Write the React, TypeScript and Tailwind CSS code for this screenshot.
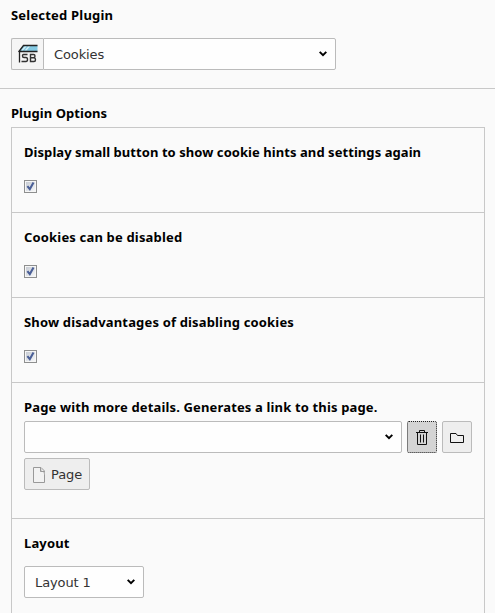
import type { ReactNode } from 'react';

const bold = 'font-["Noto_Sans",sans-serif] font-bold text-[13px] leading-4 whitespace-nowrap text-black';
const regular = 'pt-px font-["DejaVu_Sans",Verdana,sans-serif] text-[13px] leading-4 tracking-[-0.1px] text-[#333] whitespace-nowrap';

function Title({ children, spacing = 'tracking-[0.15px]' }: { children: ReactNode; spacing?: string }) {
  return <h2 className={`${bold} ${spacing}`}>{children}</h2>;
}

function Chevron() {
  return (
    <svg width="8" height="6" viewBox="0 0 8 6" className="shrink-0" fill="none" stroke="#000" strokeWidth="2">
      <path d="M.7.9 4 4.1 7.3.9" />
    </svg>
  );
}

function Select({ value, className }: { value: string; className: string }) {
  return (
    <div className={`flex h-8 items-center justify-between border border-[#bbb] bg-[#fefefe] pr-2 pl-2.5 ${className}`}>
      <span className={regular}>{value}</span>
      <Chevron />
    </div>
  );
}

function Checkbox() {
  return (
    <svg width="13" height="13" viewBox="0 0 13 13" className="block">
      <defs>
        <linearGradient id="box" x1="0" y1="0" x2="1" y2="1">
          <stop offset="0" stopColor="#c6cbd3" />
          <stop offset="1" stopColor="#f6f7f8" />
        </linearGradient>
      </defs>
      <rect x=".5" y=".5" width="12" height="12" fill="#f6f6f6" stroke="#8e8f8f" />
      <rect x="2" y="2" width="9" height="9" fill="url(#box)" />
      <path d="M3.4 6.2 5.8 9.2 9.5 2.4" fill="none" stroke="#4a5f97" strokeWidth="2.1" />
    </svg>
  );
}

function CheckRow({ label, spacing }: { label: string; spacing: string }) {
  return (
    <section className="h-[85px] border-b border-[#c8c8c8] px-3 pt-4">
      <Title spacing={spacing}>{label}</Title>
      <div className="mt-5">
        <Checkbox />
      </div>
    </section>
  );
}

function PluginIcon() {
  return (
    <svg width="20" height="20" viewBox="0 0 20 20">
      <path d="M5 1.5H19.5V7.5H1.5Z" fill="#84c9e2" />
      <path d="M8 2 4 6.5M11.5 2 7.5 6.5" stroke="#d3eff8" strokeWidth="1.3" />
      <path d="M.5 8 5.5 1.5H19.5M.5 7.5H19.5M1.5 7V18.5" fill="none" stroke="#222" strokeWidth="1.3" />
      <path
        d="M9.500 10.500H5.500Q4.500 10.500 4.500 12T6 13.500H8Q9.500 13.500 9.500 15.500T8 17.500H3.500M12.500 10.500V17.500H16Q17.500 17.500 17.500 15.700T16 13.800H12.500H15.500Q17 13.500 17 12T15.500 10.500Z"
        fill="none"
        stroke="#333"
        strokeWidth="1.400"
      />
    </svg>
  );
}

export default function App() {
  return (
    <main className="flex h-[613px] w-[495px] flex-col overflow-hidden bg-[#fafafa]">
      <section className="h-[89px] shrink-0 border-b border-[#c8c8c8] px-[11px] pt-[7px]">
        <Title spacing="tracking-[0.2px]">Selected Plugin</Title>
        <div className="mt-[15px] flex h-8">
          <div className="flex w-8 items-center justify-center rounded-l-xs border border-r-0 border-[#bbb] bg-[#f5f5f5]">
            <PluginIcon />
          </div>
          <Select value="Cookies" className="w-[293px] rounded-r-xs" />
        </div>
      </section>

      <section className="shrink-0 pt-4 pl-[11px]">
        <Title spacing="tracking-[0.05px]">Plugin Options</Title>
        <div className="mt-[6px] h-[500px] w-[474px] border border-[#c8c8c8]">
          <CheckRow label="Display small button to show cookie hints and settings again" spacing="tracking-[0.06px]" />
          <CheckRow label="Cookies can be disabled" spacing="tracking-[0.17px]" />
          <CheckRow label="Show disadvantages of disabling cookies" spacing="tracking-[0.16px]" />

          <section className="h-[136px] border-b border-[#c8c8c8] px-3 pt-4">
            <Title>Page with more details. Generates a link to this page.</Title>
            <div className="mt-[6px] flex gap-[5px]">
              <Select value="" className="w-[378px] rounded-xs" />
              <button className="flex h-8 w-[30px] items-center justify-center rounded-xs border border-dotted border-[#222] bg-[#d4d4d4]">
                <svg width="12" height="15" viewBox="0 0 12 15" fill="none" stroke="#111">
                  <path d="M0 2.5H12M3.5 2.5V.5H8.5V2.5M1.5 2.5V14.5H10.5V2.5M4.5 4.5V12.5M7.5 4.5V12.5" />
                </svg>
              </button>
              <button className="flex h-8 w-[30px] items-center justify-center rounded-xs border border-[#bbb] bg-[#eee]">
                <svg width="14" height="10" viewBox="0 0 14 10" fill="none" stroke="#111" className="mt-0.5">
                  <path d="M.5 9.5V.5H6L7.5 2.5H13.5V9.5Z" />
                </svg>
              </button>
            </div>
            <button className="mt-[5px] flex h-8 w-[66px] items-center gap-1.5 rounded-xs border border-[#bbb] bg-[#eee] pl-2">
              <svg width="12" height="16" viewBox="0 0 12 16" fill="none" stroke="#999" className="mt-0.5">
                <path d="M.5.5H8L11.5 4V15.5H.5Z" fill="#f2f2f2" />
                <path d="M7.5.5V4.5H11.5V8Z" fill="#ccc" stroke="none" />
                <path d="M7.5.5V4.5H11.5" />
              </svg>
              <span className={regular}>Page</span>
            </button>
          </section>

          <section className="px-3 pt-4">
            <Title>Layout</Title>
            <Select value="Layout 1" className="mt-[15px] w-[120px] rounded-xs" />
          </section>
        </div>
      </section>
    </main>
  );
}
